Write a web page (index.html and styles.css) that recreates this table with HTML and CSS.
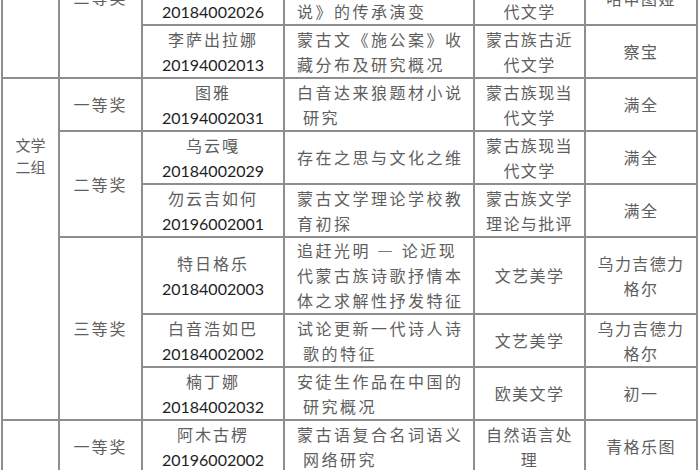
FILE: index.html
```html
<!DOCTYPE html>
<html lang="zh">
<head>
<meta charset="utf-8">
<title>获奖名单</title>
<link rel="stylesheet" href="styles.css">
</head>
<body>
<div class="page">
<table class="awards">
<colgroup>
<col class="c-group"><col class="c-level"><col class="c-name"><col class="c-title"><col class="c-major"><col class="c-tutor">
</colgroup>
<tbody>
<tr class="r2 r-first">
  <td class="group" rowspan="3"></td>
  <td class="level" rowspan="3">二等奖</td>
  <td class="name">那仁格日勒<br><span class="num">20184002025</span></td>
  <td class="title">蒙古族当代小说中的<br>民俗书写研究</td>
  <td class="major">蒙古族现当<br>代文学</td>
  <td class="tutor">满全</td>
</tr>
<tr class="r2">
  <td class="name">萨仁高娃<br><span class="num">20184002026</span></td>
  <td class="title">蒙古族古代英雄小<br>说》的传承演变</td>
  <td class="major">蒙古族古近<br>代文学</td>
  <td class="tutor">哈申图娅</td>
</tr>
<tr class="r2">
  <td class="name">李萨出拉娜<br><span class="num">20194002013</span></td>
  <td class="title">蒙古文《施公案》收<br>藏分布及研究概况</td>
  <td class="major">蒙古族古近<br>代文学</td>
  <td class="tutor">察宝</td>
</tr>
<tr class="r2">
  <td class="group group-label" rowspan="6">文学<br>二组</td>
  <td class="level">一等奖</td>
  <td class="name">图雅<br><span class="num">20194002031</span></td>
  <td class="title">白音达来狼题材小说<br>&nbsp;研究</td>
  <td class="major">蒙古族现当<br>代文学</td>
  <td class="tutor">满全</td>
</tr>
<tr class="r2">
  <td class="level" rowspan="2">二等奖</td>
  <td class="name">乌云嘎<br><span class="num">20184002029</span></td>
  <td class="title">存在之思与文化之维</td>
  <td class="major">蒙古族现当<br>代文学</td>
  <td class="tutor">满全</td>
</tr>
<tr class="r2">
  <td class="name">勿云吉如何<br><span class="num">20196002001</span></td>
  <td class="title">蒙古文学理论学校教<br>育初探</td>
  <td class="major">蒙古族文学<br>理论与批评</td>
  <td class="tutor">满全</td>
</tr>
<tr class="r3">
  <td class="level" rowspan="3">三等奖</td>
  <td class="name">特日格乐<br><span class="num">20184002003</span></td>
  <td class="title">追赶光明 — 论近现<br>代蒙古族诗歌抒情本<br>体之求解性抒发特征</td>
  <td class="major">文艺美学</td>
  <td class="tutor">乌力吉德力<br>格尔</td>
</tr>
<tr class="r2">
  <td class="name">白音浩如巴<br><span class="num">20184002002</span></td>
  <td class="title">试论更新一代诗人诗<br>&nbsp;歌的特征</td>
  <td class="major">文艺美学</td>
  <td class="tutor">乌力吉德力<br>格尔</td>
</tr>
<tr class="r2">
  <td class="name">楠丁娜<br><span class="num">20184002032</span></td>
  <td class="title">安徒生作品在中国的<br>&nbsp;研究概况</td>
  <td class="major">欧美文学</td>
  <td class="tutor">初一</td>
</tr>
<tr class="r2">
  <td class="group"></td>
  <td class="level">一等奖</td>
  <td class="name">阿木古楞<br><span class="num">20196002002</span></td>
  <td class="title">蒙古语复合名词语义<br>&nbsp;网络研究</td>
  <td class="major">自然语言处<br>理</td>
  <td class="tutor">青格乐图</td>
</tr>
</tbody>
</table>
</div>
</body>
</html>
```

FILE: styles.css
```css
html, body {
  margin: 0;
  padding: 0;
  background: #ffffff;
}

.page {
  width: 700px;
  height: 470px;
  overflow: hidden;
  padding-left: 1px;
  box-sizing: border-box;
}

.awards {
  margin-top: -84px;
  border-collapse: collapse;
  table-layout: fixed;
  width: 696px;
  font-family: "Noto Sans CJK SC", "Noto Sans", sans-serif;
  font-size: 16px;
  line-height: 25px;
  color: #5e5e5e;
}

.c-group { width: 57px; }
.c-level { width: 83px; }
.c-name { width: 142px; }
.c-title { width: 190px; }
.c-major { width: 111px; }
.c-tutor { width: 112px; }

.awards td {
  border: 2px solid #8e8e8e;
  padding: 0;
  text-align: center;
  vertical-align: middle;
  letter-spacing: 2px;
  overflow: hidden;
  white-space: nowrap;
}

.r2 { height: 53px; }
.r-first { height: 55px; }
.r3 { height: 77px; }

.awards td.title {
  text-align: left;
  padding-left: 12px;
  letter-spacing: 2.5px;
}

.awards td.major,
.awards td.tutor {
  letter-spacing: 1.4px;
}

.awards td.group-label {
  vertical-align: top;
  padding-top: 55px;
  line-height: 22px;
  font-size: 15px;
  letter-spacing: 0;
}

.num {
  font-family: "Lato", "Liberation Sans", sans-serif;
  font-size: 16px;
  letter-spacing: 0;
  color: #1e1e1e;
}
```
